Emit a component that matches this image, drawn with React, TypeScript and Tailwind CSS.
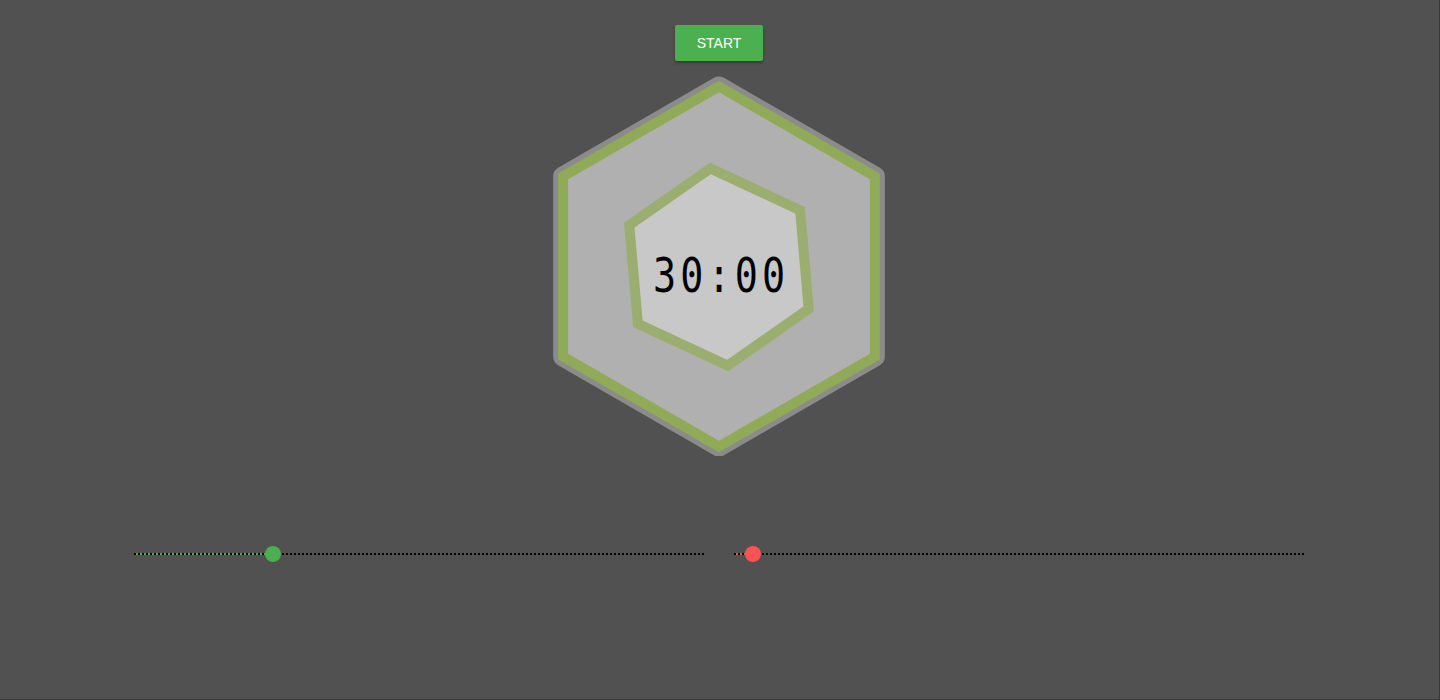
import React from "react";

const OUTER = "170,10.5 325.88,100.5 325.88,280.5 170,370.5 14.12,280.5 14.12,100.5";
const INNER =
  "161.37,92.38 251.1,134.22 259.72,232.84 178.63,289.62 88.9,247.78 80.28,149.16";

function Timer({ time }: { time: string }) {
  return (
    <svg width="340" height="380" viewBox="0 0 340 380" className="mt-[15px] block">
      <polygon points={OUTER} fill="none" stroke="#8b8b8b" strokeWidth="20" strokeLinejoin="round" />
      <polygon points={OUTER} fill="#b0b0b0" stroke="#8fab57" strokeWidth="10" />
      <polygon points={INNER} fill="#c8c8c8" stroke="#9aae6f" strokeWidth="10" />
      <g transform="scale(0.8 1)">
        <text
          x="130"
          y="216"
          fontFamily="'DejaVu Sans Mono', monospace"
          fontSize="48"
          letterSpacing="5.2"
          fill="#000"
        >
          {time}
        </text>
      </g>
    </svg>
  );
}

function Slider({ fill, pos, color }: { fill: string; pos: number; color: string }) {
  return (
    <div className="relative h-4 w-[570px]">
      <div className="absolute inset-x-0 top-[7px] h-[2px]">
        <div className={`absolute left-0 top-0 h-[2px] ${fill}`} style={{ width: pos }} />
        <div className="absolute inset-x-0 top-0 border-t-2 border-dotted border-black" />
      </div>
      <div
        className={`absolute top-0 h-4 w-4 rounded-full ${color}`}
        style={{ left: pos - 8 }}
      />
    </div>
  );
}

export default function App() {
  return (
    <div className="flex min-h-[700px] w-full flex-col items-center border-r border-b border-[#3a3a3a] bg-[#515151] pr-[1px] font-['Liberation_Sans',sans-serif]">
      <button className="mt-[25px] h-9 w-[88px] rounded-[2px] bg-[#4caf50] text-sm text-white shadow-[0_2px_3px_rgba(0,0,0,0.3)]">
        START
      </button>
      <Timer time="30:00" />
      <div className="mt-[90px] flex gap-[30px]">
        <Slider fill="bg-[#4caf50]" color="bg-[#4caf50]" pos={139} />
        <Slider fill="bg-[#ff5252]" color="bg-[#ff5252]" pos={19} />
      </div>
    </div>
  );
}
